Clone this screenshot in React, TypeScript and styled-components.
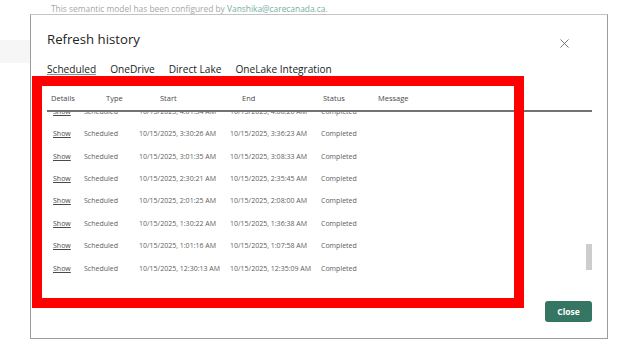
import React from "react";
import styled, { createGlobalStyle } from "styled-components";

const Global = createGlobalStyle`
  html, body { margin: 0; padding: 0; background: #ffffff; }
  body { font-family: "Open Sans", "Noto Sans", sans-serif; }
  * { box-sizing: border-box; }
`;

const Page = styled.div`
  position: relative;
  width: 624px;
  height: 343px;
  overflow: hidden;
  background: #ffffff;
`;

const Notice = styled.div`
  padding: 3px 0 0 51px;
  height: 40px;
  font-size: 8.4px;
  line-height: 12px;
  color: #a6a6a6;
  white-space: nowrap;
`;

const Email = styled.span`
  color: #78ad9f;
`;

const NavBand = styled.div`
  width: 30px;
  height: 23px;
  background: #f6f6f6;
`;

const Dialog = styled.div`
  position: absolute;
  left: 30px;
  top: 14px;
  width: 578px;
  height: 325px;
  background: #ffffff;
  border: 1px solid #9c9c9c;
  border-top-color: #c4c4c4;
  padding: 0 15px 0 16px;
  display: flex;
  flex-direction: column;
`;

const DialogHeader = styled.div`
  display: flex;
  justify-content: space-between;
  align-items: flex-start;
  margin-top: 15px;
  height: 18px;
`;

const Title = styled.div`
  font-size: 13.2px;
  line-height: 18px;
  color: #252423;
  white-space: nowrap;
`;

const CloseIcon = styled.svg`
  width: 9px;
  height: 9px;
  margin: 8.5px 23.5px 0 0;
`;

const TabBar = styled.div`
  display: flex;
  gap: 14px;
  margin-top: 16px;
`;

const Tab = styled.div<{ $active?: boolean }>`
  font-size: 10.15px;
  line-height: 10px;
  color: #252423;
  white-space: nowrap;
  border-bottom: 1px solid ${(p) => (p.$active ? "#8d8d8d" : "transparent")};
`;

const TableHeader = styled.div`
  display: grid;
  grid-template-columns: 55px 54px 82px 81px 55px 1fr;
  padding-left: 4px;
  margin-top: 11px;
  height: 26px;
  align-items: center;
  border-bottom: 2px solid #727272;
  font-size: 7.5px;
  color: #4a4a4a;
  padding-bottom: 1px;
`;

const HeaderCell = styled.div`
  white-space: nowrap;
`;

const TableBody = styled.div`
  display: flex;
  height: 178px;
`;

const RowsViewport = styled.div`
  flex: 1;
  overflow: hidden;
`;

const RowsList = styled.div`
  margin-top: -12px;
`;

const Row = styled.div`
  display: grid;
  grid-template-columns: 31px 55px 91px 91px 1fr;
  padding-left: 6px;
  height: 22.45px;
  align-items: center;
  font-size: 7px;
  color: #5e5e5e;
`;

const Cell = styled.div`
  white-space: nowrap;
`;

const ShowLink = styled.span`
  color: #4a4a4a;
  text-decoration: underline;
  text-underline-offset: 1px;
`;

const ScrollTrack = styled.div`
  width: 6px;
  margin-left: 3px;
`;

const ScrollThumb = styled.div`
  margin-top: 132px;
  width: 6px;
  height: 26px;
  background: #cdcdcd;
`;

const Footer = styled.div`
  display: flex;
  justify-content: flex-end;
  margin-top: 11px;
`;

const CloseButton = styled.button`
  width: 47px;
  height: 21px;
  border: none;
  border-radius: 3px;
  background: #357563;
  color: #ffffff;
  font-family: "Open Sans", "Noto Sans", sans-serif;
  font-size: 8.5px;
  font-weight: 700;
  padding: 0;
`;

const Highlight = styled.div`
  position: absolute;
  left: 32px;
  top: 76px;
  width: 492px;
  height: 232px;
  border: 10px solid #ff0000;
  pointer-events: none;
`;

type Run = { start: string; end: string };

const runs: Run[] = [
  { start: "10/15/2025, 4:01:34 AM", end: "10/15/2025, 4:08:20 AM" },
  { start: "10/15/2025, 3:30:26 AM", end: "10/15/2025, 3:36:23 AM" },
  { start: "10/15/2025, 3:01:35 AM", end: "10/15/2025, 3:08:33 AM" },
  { start: "10/15/2025, 2:30:21 AM", end: "10/15/2025, 2:35:45 AM" },
  { start: "10/15/2025, 2:01:25 AM", end: "10/15/2025, 2:08:00 AM" },
  { start: "10/15/2025, 1:30:22 AM", end: "10/15/2025, 1:36:38 AM" },
  { start: "10/15/2025, 1:01:16 AM", end: "10/15/2025, 1:07:58 AM" },
  { start: "10/15/2025, 12:30:13 AM", end: "10/15/2025, 12:35:09 AM" },
];

export default function App() {
  return (
    <>
      <Global />
      <Page>
        <Notice>
          This semantic model has been configured by <Email>Vanshika@carecanada.ca</Email>.
        </Notice>
        <NavBand />
        <Dialog>
          <DialogHeader>
            <Title>Refresh history</Title>
            <CloseIcon viewBox="0 0 10 10">
              <path d="M0.5 0.5 L9.5 9.5 M9.5 0.5 L0.5 9.5" stroke="#5a5a5a" strokeWidth="0.9" fill="none" />
            </CloseIcon>
          </DialogHeader>
          <TabBar>
            <Tab $active>Scheduled</Tab>
            <Tab>OneDrive</Tab>
            <Tab>Direct Lake</Tab>
            <Tab>OneLake Integration</Tab>
          </TabBar>
          <TableHeader>
            <HeaderCell>Details</HeaderCell>
            <HeaderCell>Type</HeaderCell>
            <HeaderCell>Start</HeaderCell>
            <HeaderCell>End</HeaderCell>
            <HeaderCell>Status</HeaderCell>
            <HeaderCell>Message</HeaderCell>
          </TableHeader>
          <TableBody>
            <RowsViewport>
              <RowsList>
                {runs.map((r) => (
                  <Row key={r.start}>
                    <Cell>
                      <ShowLink>Show</ShowLink>
                    </Cell>
                    <Cell>Scheduled</Cell>
                    <Cell>{r.start}</Cell>
                    <Cell>{r.end}</Cell>
                    <Cell>Completed</Cell>
                  </Row>
                ))}
              </RowsList>
            </RowsViewport>
            <ScrollTrack>
              <ScrollThumb />
            </ScrollTrack>
          </TableBody>
          <Footer>
            <CloseButton>Close</CloseButton>
          </Footer>
        </Dialog>
        <Highlight />
      </Page>
    </>
  );
}
